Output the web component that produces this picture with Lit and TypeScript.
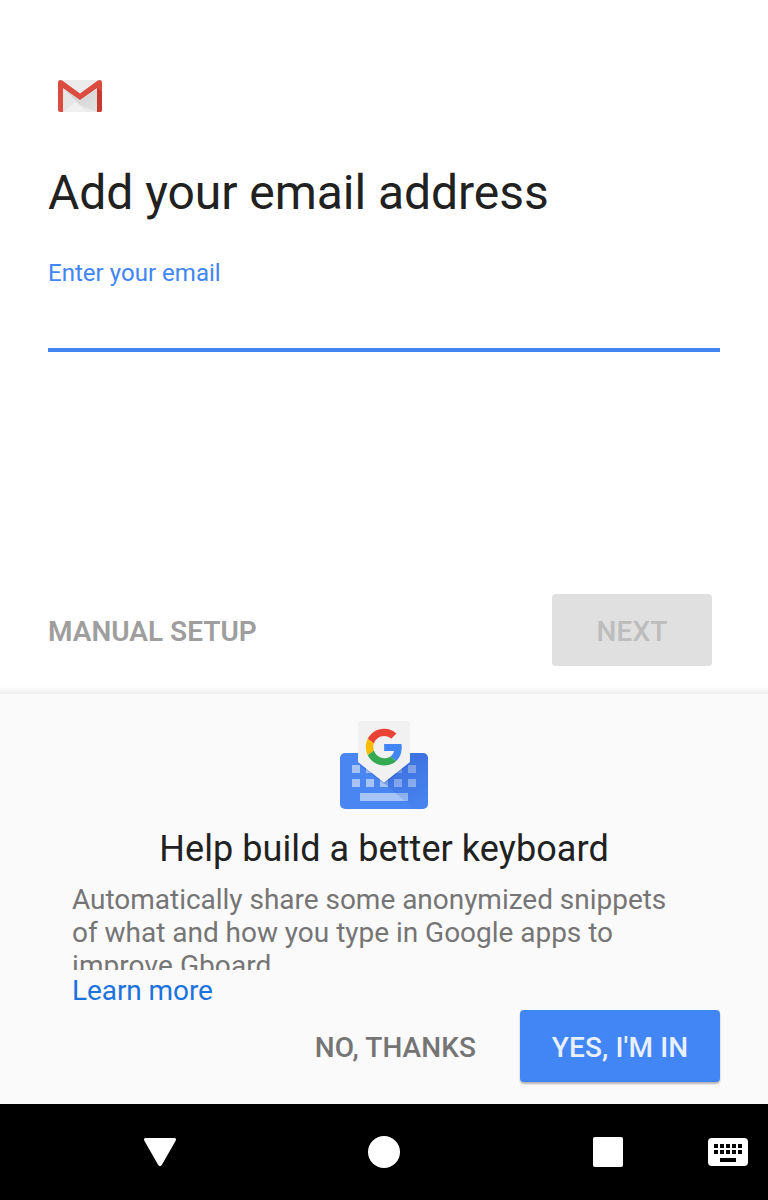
import { LitElement, html, css, svg } from "lit";
import { customElement } from "lit/decorators.js";

const keyColumns = [12, 26, 40, 54, 68];

@customElement("gmail-logo")
class GmailLogo extends LitElement {
  static styles = css`:host, svg { display: block; width: 44px; height: 32px; }`;
  render() {
    return html`<svg viewBox="0 0 44 32">
      <defs>
        <linearGradient id="fold" x1="0" y1="0" x2="1" y2="1">
          <stop offset="0" stop-color="#000" stop-opacity=".12" />
          <stop offset="1" stop-color="#000" stop-opacity=".01" />
        </linearGradient>
      </defs>
      <path d="M3 0H41V32H3Z" fill="#e6e6e6" />
      <path d="M5 32L17 22L22 25L39 32Z" fill="#f0f0f0" />
      <path d="M5 8L29 32H39V9L22 20Z" fill="url(#fold)" />
      <path d="M4 0H40L22 14Z" fill="#ececec" />
      <path d="M0 3V29.500Q0 32 2.500 32H5V8L22 20L39 8V32H41.500Q44 32 44 29.500V3Q44 0 41.500 0Q40.500 0 39.500 .7L22 13.500L4.500 .7Q3.500 0 2.500 0Q0 0 0 3Z" fill="#db4b3f" />
      <path d="M39 8L44 12V29.500Q44 32 41.500 32H39Z" fill="#c9392d" />
    </svg>`;
  }
}

@customElement("gboard-logo")
class GboardLogo extends LitElement {
  static styles = css`:host, svg { display: block; width: 88px; height: 88px; }`;
  render() {
    return html`<svg viewBox="0 0 88 88">
      <defs>
        <linearGradient id="shade" gradientUnits="userSpaceOnUse" x1="56" y1="48" x2="78" y2="84">
          <stop offset="0" stop-color="#2a56c6" stop-opacity=".38" />
          <stop offset="1" stop-color="#2a56c6" stop-opacity=".08" />
        </linearGradient>
        <clipPath id="board"><rect y="32" width="88" height="56" rx="5" /></clipPath>
      </defs>
      <rect y="32" width="88" height="56" rx="5" fill="#4a86f2" />
      <rect x="20" y="72" width="48" height="8" fill="#a6c4f9" />
      ${keyColumns.map((x) => svg`<rect x=${x} y="44" width="8" height="8" fill="#a6c4f9" /><rect x=${x} y="58" width="8" height="8" fill="#a6c4f9" />`)}
      <path d="M70 32H88V88H74L44 62Z" fill="url(#shade)" clip-path="url(#board)" />
      <path d="M18 43L44 63L70 43V42L44 61L18 42Z" fill="#1e3f91" opacity=".25" />
      <path d="M21 0H67Q70 0 70 3V41L44 61.500L18 41V3Q18 0 21 0Z" fill="#f1f1f1" />
      <g transform="translate(25.800 7.700) scale(.765)">
        <path fill="#ea4335" d="M24 9.500c3.540 0 6.710 1.220 9.210 3.600l6.850-6.850C35.900 2.380 30.470 0 24 0 14.620 0 6.510 5.380 2.560 13.220l7.980 6.190C12.430 13.720 17.740 9.500 24 9.500z" />
        <path fill="#4285f4" d="M46.980 24.550c0-1.570-.15-3.090-.38-4.550H24v9.020h12.940c-.58 2.960-2.260 5.480-4.780 7.180l7.730 6c4.510-4.180 7.090-10.360 7.090-17.650z" />
        <path fill="#fbbc05" d="M10.530 28.590c-.48-1.450-.76-2.990-.76-4.590s.27-3.140.76-4.590l-7.980-6.190C.92 16.460 0 20.120 0 24c0 3.880.92 7.540 2.560 10.780l7.970-6.190z" />
        <path fill="#34a853" d="M24 48c6.480 0 11.930-2.130 15.890-5.810l-7.730-6c-2.150 1.450-4.920 2.300-8.160 2.300-6.260 0-11.570-4.220-13.470-9.910l-7.980 6.190C6.510 42.620 14.620 48 24 48z" />
      </g>
    </svg>`;
  }
}

@customElement("system-nav")
class SystemNav extends LitElement {
  static styles = css`
    :host { display: block; height: 96px; background: #000; }
    .bar { display: grid; grid-template-columns: 48px 224px 224px 224px 48px; height: 96px; align-items: center; justify-items: center; }
    .bar svg { display: block; fill: #fff; }
    .back { grid-column: 2; }
    .keys { justify-self: start; margin-left: -12px; }
  `;
  render() {
    return html`<nav class="bar">
      <svg class="back" width="34" height="30" viewBox="0 0 34 30"><path d="M3 1H31Q34 1 32.500 4L19.200 27.300Q17 31 14.800 27.300L1.500 4Q0 1 3 1Z" /></svg>
      <svg width="32" height="32"><circle cx="16" cy="16" r="16" /></svg>
      <svg width="30" height="30"><rect width="30" height="30" rx="2" /></svg>
      <svg class="keys" width="40" height="28" viewBox="0 0 40 28">
        <rect width="40" height="28" rx="4" />
        ${[6, 12, 18, 24, 30].map((x) => svg`<path d="M${x} 6h4v4h-4zM${x} 12h4v4h-4z" fill="#000" />`)}
        <path d="M12 20h16v4H12z" fill="#000" />
      </svg>
    </nav>`;
  }
}

@customElement("app-root")
class AppRoot extends LitElement {
  static styles = css`
    :host { display: flex; flex-direction: column; width: 768px; height: 1200px; overflow: hidden; background: #fff; font-family: Roboto, sans-serif; }
    * { box-sizing: border-box; }
    h1, h2, p { margin: 0; font-weight: 400; }
    button { border: 0; margin: 0; font: 500 28px/33px Roboto, sans-serif; background: none; white-space: nowrap; }
    .setup { display: flex; flex-direction: column; height: 694px; padding: 80px 48px 0; background: linear-gradient(#fff 0 686px, #fcfcfc 688px, #ececec 694px); }
    .logo { margin-left: 10px; }
    .title { margin-top: 53px; font-size: 48px; line-height: 56px; letter-spacing: -0.045px; color: #212121; }
    .field { display: flex; flex-direction: column; height: 93px; margin-top: 38px; border-bottom: 4px solid #4285f4; }
    .label { font-size: 24px; line-height: 28px; letter-spacing: 0.03px; color: #4285f4; }
    .actions { display: flex; justify-content: space-between; align-items: center; margin-top: 242px; padding-right: 8px; }
    .manual { padding: 2px 0 0; font-weight: 600; color: #9e9e9e; }
    .next { width: 160px; height: 72px; padding: 2px 0 0; border-radius: 4px; background: #e0e0e0; color: #bdbdbd; letter-spacing: 0.15px; }
    .sheet { display: flex; flex-direction: column; height: 410px; padding: 27px 48px 0 72px; background: #fafafa; }
    .mark { margin-left: 268px; }
    .heading { margin: 19px 24px 0 0; font-size: 36px; line-height: 42px; letter-spacing: 0.08px; text-align: center; color: #212121; }
    .copy { height: 87px; margin-top: 13px; overflow: hidden; font-size: 28px; line-height: 33px; letter-spacing: -0.025px; color: #757575; }
    .line { display: block; white-space: nowrap; }
    .line:last-child { letter-spacing: 0.08px; }
    .more { margin-top: 4px; font-size: 28px; line-height: 33px; letter-spacing: -0.08px; color: #1a73de; }
    .choices { display: flex; justify-content: flex-end; align-items: center; gap: 44px; margin-top: 3px; }
    .no { padding: 2px 0 0; letter-spacing: 0.08px; color: #757575; }
    .yes { width: 200px; height: 72px; padding: 2px 0 0; border-radius: 4px; background: #4285f4; color: #e8f0fe; letter-spacing: 0.15px; box-shadow: 0 2px 2px rgba(0,0,0,.28); }
  `;
  render() {
    return html`
      <main class="setup">
        <gmail-logo class="logo"></gmail-logo>
        <h1 class="title">Add your email address</h1>
        <div class="field"><span class="label">Enter your email</span></div>
        <div class="actions">
          <button class="manual">MANUAL SETUP</button>
          <button class="next">NEXT</button>
        </div>
      </main>
      <section class="sheet">
        <gboard-logo class="mark"></gboard-logo>
        <h2 class="heading">Help build a better keyboard</h2>
        <p class="copy">
          <span class="line">Automatically share some anonymized snippets</span>
          <span class="line">of what and how you type in Google apps to</span>
          <span class="line">improve Gboard</span>
        </p>
        <span class="more">Learn more</span>
        <div class="choices">
          <button class="no">NO, THANKS</button>
          <button class="yes">YES, I'M IN</button>
        </div>
      </section>
      <system-nav></system-nav>
    `;
  }
}
